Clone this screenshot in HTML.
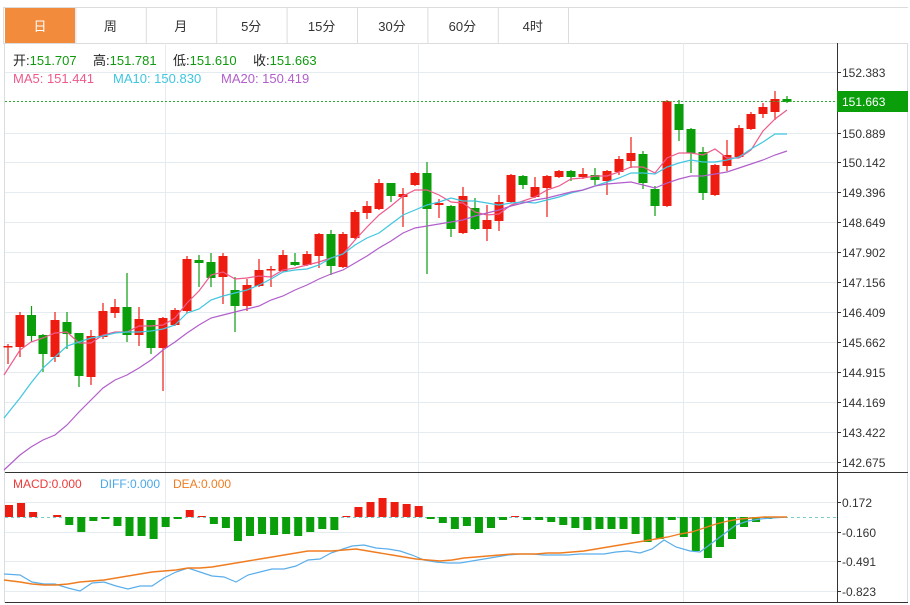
<!DOCTYPE html>
<html><head><meta charset="utf-8"><style>
body{margin:0;background:#fff;width:910px;height:605px;overflow:hidden;font-family:"Liberation Sans","Noto Sans CJK SC",sans-serif}
svg{position:absolute;left:0;top:0}
</style></head><body>
<svg id="s" width="910" height="605" xmlns="http://www.w3.org/2000/svg" font-family="Liberation Sans, Noto Sans CJK SC, sans-serif"></svg>
<script>
var s=document.getElementById('s'),h='';
function L(x1,y1,x2,y2,c,w,extra){h+='<line x1="'+x1+'" y1="'+y1+'" x2="'+x2+'" y2="'+y2+'" stroke="'+c+'" stroke-width="'+(w||1)+'" '+(extra||'')+'/>';}
function R(x,y,w,hh,c){h+='<rect x="'+x+'" y="'+y+'" width="'+w+'" height="'+hh+'" fill="'+c+'"/>';}
function T(x,y,t,c,sz,anc){h+='<text x="'+x+'" y="'+y+'" fill="'+c+'" font-size="'+(sz||13)+'"'+(anc?' text-anchor="'+anc+'"':'')+'>'+t+'</text>';}
function P(pts,c,w){h+='<polyline fill="none" stroke="'+c+'" stroke-width="'+(w||1.2)+'" points="'+pts.map(function(p){return p.join(',')}).join(' ')+'"/>';}
L(3,7.5,908,7.5,'#dcdcdc');L(3,43.5,908,43.5,'#dcdcdc');
R(5,8,70,35,'#f28c3c');
var tabs=['日','周','月','5分','15分','30分','60分','4时'];
for(var i=0;i<8;i++){var x=5+i*70.4;if(i>0)L(x+.5,8,x+.5,43,'#dcdcdc');T(x+35,31,tabs[i],i==0?'#fff':'#333',13,'middle');}
L(568.5,8,568.5,43,'#dcdcdc');
L(3.5,7,3.5,43,'#dcdcdc');
L(4.5,43,4.5,603,'#d8dde2');L(907.5,43,907.5,603,'#d8dde2');
var py=[[72,'152.383'],[133,'150.889'],[162,'150.142'],[192,'149.396'],[222,'148.649'],[252,'147.902'],[282,'147.156'],[312,'146.409'],[342,'145.662'],[372,'144.915'],[402,'144.169'],[432,'143.422'],[462,'142.675']];
py.forEach(function(p){L(5,p[0]+.5,837,p[0]+.5,'#e4ecf2');L(837,p[0]+.5,841,p[0]+.5,'#333');T(842,p[0]+5,p[1],'#333',12);});
var my=[[502,'0.172'],[532,'-0.160'],[561,'-0.491'],[591,'-0.823']];
my.forEach(function(p){L(5,p[0]+.5,837,p[0]+.5,'#e4ecf2');L(837,p[0]+.5,841,p[0]+.5,'#333');T(842,p[0]+5,p[1],'#333',12);});
[165,418,683].forEach(function(x){L(x+.5,43,x+.5,602,'#e4ecf2');});
L(837.5,43,837.5,603,'#333');L(5,472.5,908,472.5,'#333');L(5,602.5,908,602.5,'#333');
var C=[[8,347,346,344,364],[20,347,315,312,357],[31.5,315,336,306,342],[43,335,354,334,372],[55,357,320,312,362],[67,322,334,312,349],[79,333,376,333,387],[91,377,336,330,385],[103,337,311,303,339],[115,313,307,299,318],[127,307,335,273,342],[139,335,319,307,346],[151,320,348,320,354],[163,348,318,317,391],[175,325,310,308,326],[187,311,259,256,313],[199,260,263,255,287],[211,262,278,253,287],[223,277,256,253,304],[235,290,306,277,332],[247,306,285,279,311],[259,286,270,259,287],[271,270,269,266,287],[283,271,255,250,272],[295,262,265,253,266],[307,265,254,251,266],[319,256,234,233,268],[331,234,266,230,275],[343,267,234,232,268],[355,238,212,210,239],[367,213,206,201,219],[379,209,183,179,210],[391,183,196,183,202],[403,197,194,188,227],[415,185,173,172,186],[427,173,209,162,274],[439,205,203,199,218],[451,206,229,205,237],[463,233,196,187,234],[475,208,229,198,230],[487,229,220,205,241],[499,221,202,195,231],[511,202,175,174,203],[523,176,185,175,189],[535,197,187,177,198],[547,188,176,175,217],[559,177,171,170,178],[571,171,177,170,181],[583,177,174,168,179],[595,175,180,168,185],[607,181,171,170,195],[619,172,159,156,175],[631,161,153,137,168],[643,154,183,151,189],[655,189,206,186,216],[667,206,101,100,207],[679,104,130,100,141],[691,129,153,128,173],[703,152,193,147,200],[715,195,165,164,196],[727,166,155,140,171],[739,157,128,125,158],[751,129,114,112,130],[763,114,107,103,118],[775,112,99,91,120],[787,99,102,96,103]];
C.forEach(function(c){var col=c[2]>c[1]?'#0a9e0a':'#ee1c10';
L(c[0],c[3],c[0],c[4],col,1.2);var t=Math.min(c[1],c[2]),b=Math.max(c[1],c[2]);R(c[0]-4.5,t,9,Math.max(b-t,1.5),col);});
var ma5=[[4,375],[20,350],[31,342],[43,338],[55,333],[67,332],[79,343],[91,343],[103,335],[115,332],[127,332],[139,326],[151,326],[163,325],[175,318],[187,303],[199,291],[211,275],[223,272],[235,279],[247,278],[259,276],[271,277],[283,270],[295,268],[307,265],[319,262],[331,258],[343,254],[355,240],[367,227],[379,215],[391,206],[403,196],[415,190],[427,190],[439,195],[451,202],[463,203],[475,212],[487,215],[499,214],[511,205],[523,201],[535,197],[547,190],[559,186],[571,179],[583,178],[595,176],[607,176],[619,172],[631,167],[643,167],[655,173],[667,158],[679,153],[691,153],[703,155],[715,149],[727,158],[739,158],[751,150],[763,131],[775,119],[787,110]];
var ma10=[[4,418],[20,398],[31,383],[43,368],[55,357],[67,346],[79,342],[91,338],[103,336],[115,333],[127,332],[139,332],[151,331],[163,329],[175,325],[187,313],[199,309],[211,300],[223,296],[235,293],[247,290],[259,285],[271,279],[283,272],[295,270],[307,269],[319,265],[331,258],[343,254],[355,245],[367,238],[379,233],[391,224],[403,215],[415,210],[427,205],[439,202],[451,198],[463,201],[475,201],[487,203],[499,205],[511,203],[523,202],[535,203],[547,200],[559,197],[571,193],[583,190],[595,186],[607,182],[619,178],[631,173],[643,173],[655,174],[667,167],[679,163],[691,160],[703,162],[715,162],[727,160],[739,157],[751,149],[763,142],[775,134],[787,134]];
var ma20=[[4,470],[20,455],[31,447],[43,440],[55,435],[67,425],[79,412],[91,400],[103,388],[115,380],[127,375],[139,368],[151,360],[163,350],[175,342],[187,333],[199,325],[211,318],[223,315],[235,312],[247,309],[259,306],[271,300],[283,296],[295,290],[307,285],[319,279],[331,274],[343,270],[355,263],[367,256],[379,248],[391,241],[403,233],[415,228],[427,226],[439,224],[451,222],[463,220],[475,216],[487,213],[499,210],[511,206],[523,203],[535,200],[547,198],[559,195],[571,192],[583,190],[595,186],[607,184],[619,183],[631,182],[643,185],[655,188],[667,183],[679,179],[691,176],[703,176],[715,174],[727,172],[739,168],[751,164],[763,160],[775,155],[787,151]];
P(ma5,'#ee5a8c');P(ma10,'#3fc6e0');P(ma20,'#b25ecb');
L(5,101.5,837,101.5,'#2eaa2e',1,'stroke-dasharray="2,2"');
R(837,91,71,21,'#0a9f0a');T(842,106,'151.663','#fff',12);
function KV(x,k,v){h+='<text x="'+x+'" y="65" font-size="13"><tspan fill="#222">'+k+'</tspan><tspan fill="#109a10">'+v+'</tspan></text>';}
KV(13,'开:','151.707');KV(93,'高:','151.781');KV(173,'低:','151.610');KV(253,'收:','151.663');
T(13,83,'MA5: 151.441','#ee5a8c',13);T(113,83,'MA10: 150.830','#3fc6e0',13);T(221,83,'MA20: 150.419','#b25ecb',13);
T(13,488,'MACD:0.000','#ee3a3a',12);T(100,488,'DIFF:0.000','#4aa8e8',12);T(173,488,'DEA:0.000','#f07c20',12);
L(5,517.5,837,517.5,'#7cc',1,'stroke-dasharray="3,3"');
var B=[12,14,5,0,2,-8,-15,-4,-2,-9,-19,-19,-22,-10,-2,7,1,-7,-11,-24,-19,-17,-18,-17,-19,-15,-12,-13,1,10,15,19,15,13,11,-2,-6,-12,-9,-16,-11,-3,1,-3,-3,-5,-8,-11,-13,-12,-12,-12,-17,-25,-22,-3,-20,-34,-41,-30,-22,-10,-5,-2,-1,0];
B.forEach(function(v,i){var x=9+i*12.05;if(v==0)return;var col=v>0?'#ee1c10':'#0a9e0a';if(v>0)R(x-4,517-v,8,v,col);else R(x-4,517,8,-v,col);});
var dif=[[4,574],[20,575],[32,582],[44,584],[55,584],[68,588],[80,591],[92,583],[104,582],[116,586],[128,589],[140,586],[152,586],[164,578],[176,572],[188,568],[200,572],[212,576],[224,577],[236,582],[248,575],[260,572],[272,569],[284,569],[296,566],[308,560],[320,559],[331,553],[340,550],[352,546],[364,545],[376,548],[388,549],[400,551],[412,555],[424,560],[436,562],[448,563],[460,563],[472,561],[484,559],[496,557],[508,555],[520,554],[532,554],[544,555],[556,555],[568,555],[580,554],[592,554],[604,554],[616,552],[628,551],[640,553],[652,549],[664,540],[676,547],[690,551],[700,552],[712,543],[724,534],[736,525],[748,521],[760,519],[772,518],[787,517]];
var dea=[[4,580],[20,582],[32,584],[44,585],[56,585],[68,584],[80,582],[92,581],[104,580],[116,578],[128,576],[140,574],[152,572],[164,571],[176,570],[188,568],[200,568],[212,567],[224,565],[236,563],[248,561],[260,559],[272,557],[284,555],[296,553],[308,551],[320,551],[332,551],[344,550],[356,549],[368,551],[380,553],[392,555],[404,557],[416,559],[428,560],[440,561],[452,560],[464,558],[476,557],[488,556],[500,555],[512,554],[524,554],[536,554],[548,553],[560,553],[572,552],[584,551],[596,549],[608,547],[620,545],[632,543],[644,541],[656,539],[668,537],[680,534],[692,532],[704,528],[716,524],[728,521],[740,519],[752,518],[764,517],[787,517]];
P(dif,'#5aaeea');P(dea,'#f07c20',1.4);
s.innerHTML=h;
</script>
</body></html>
